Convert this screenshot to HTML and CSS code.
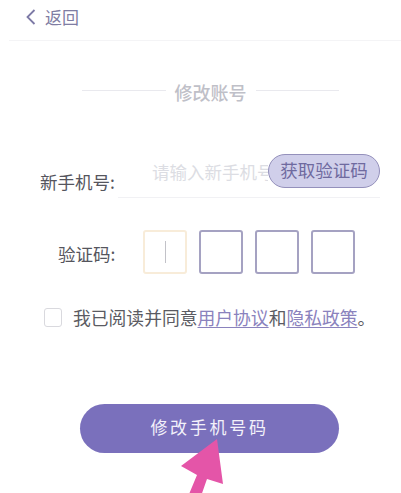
FILE: index.html
```html
<!DOCTYPE html>
<html lang="zh">
<head>
<meta charset="utf-8">
<title>修改账号</title>
<link rel="stylesheet" href="styles.css">
</head>
<body>
<div class="page">
  <header class="topbar">
    <svg class="chev" width="12" height="18" viewBox="0 0 12 18"><path d="M9.5 2 L2.5 9 L9.5 16" fill="none" stroke="#7d7aa6" stroke-width="1.8"/></svg>
    <span class="back">返回</span>
  </header>
  <div class="title-row">
    <span class="rule"></span>
    <span class="title">修改账号</span>
    <span class="rule"></span>
  </div>
  <div class="phone-row">
    <span class="label phone-label">新手机号:</span>
    <div class="phone-field">
      <span class="placeholder">请输入新手机号</span>
      <span class="get-code">获取验证码</span>
    </div>
  </div>
  <div class="code-row">
    <span class="label">验证码:</span>
    <div class="codes">
      <span class="box active"><i class="caret"></i></span>
      <span class="box"></span>
      <span class="box"></span>
      <span class="box"></span>
    </div>
  </div>
  <div class="agree">
    <span class="check"></span>
    <span class="agree-text">我已阅读并同意<a class="link">用户协议</a>和<a class="link">隐私政策</a>。</span>
  </div>
  <div class="submit">修改手机号码</div>
  <svg class="arrow" width="60" height="60" viewBox="0 0 60 60"><path d="M41 0 L5 27 L21 36 L11 60 L24 60 L31 40 L47 45 Z" fill="#e455a8"/></svg>
</div>
</body>
</html>
```
FILE: styles.css
```css
* { box-sizing: border-box; }
html, body { margin: 0; padding: 0; background: #fff; }
body { font-family: "Noto Sans CJK SC", "Noto Sans", sans-serif; }
.page { position: relative; width: 401px; height: 493px; overflow: hidden; }
.topbar {
  height: 41px; margin-left: 9px; padding: 0 0 6px 16px;
  display: flex; align-items: center; gap: 8px;
  border-bottom: 1px solid #f4f4f6;
}
.back { font-size: 17px; color: #7f7da3; line-height: 24px; }
.title-row {
  margin-top: 39px; padding-left: 82px; width: 339px;
  display: flex; align-items: center; gap: 9px; height: 24px;
}
.rule { flex: 1; height: 1px; background: #e9e9ee; margin-top: -4px; }
.title { font-size: 18px; font-weight: 500; color: #bfc0c8; line-height: 24px; }
.label { font-size: 17.5px; color: #55555d; line-height: 24px; white-space: nowrap; }
.phone-row { margin-top: 50px; margin-left: 40px; width: 340px; display: flex; }
.phone-label { margin-top: 16px; width: 78px; }
.phone-field {
  flex: 1; height: 44px; padding-left: 34px; border-bottom: 1px solid #f1f1f4;
  display: flex; align-items: flex-start; overflow: hidden;
}
.placeholder {
  width: 116px; flex: none; overflow: hidden; white-space: nowrap;
  font-size: 17.5px; line-height: 24px; margin-top: 6px; color: #dcdde3;
}
.get-code {
  flex: none; width: 112px; height: 34px; border-radius: 17px;
  border: 1px solid #9490bb; background: #d0cfea; color: #6f6a9f;
  font-size: 17.5px; line-height: 30px; text-align: center;
}
.code-row { margin-top: 32px; display: flex; align-items: center; padding-left: 58px; }
.code-row .label { width: 85px; margin-top: 4px; }
.codes { display: flex; gap: 12px; }
.box {
  width: 44px; height: 44px; border: 2px solid #a5a2c2; border-radius: 3px;
  display: flex; align-items: center; justify-content: center;
}
.box.active { border-color: #f8ecd9; }
.caret { width: 1px; height: 22px; background: #c2c2c8; }
.agree { margin-top: 31px; padding-left: 44px; display: flex; align-items: center; gap: 11px; }
.check { width: 18px; height: 19px; border: 1px solid #d9d9de; border-radius: 3px; }
.agree-text { font-size: 17.8px; color: #5b5b62; line-height: 24px; white-space: nowrap; }
.link { color: #8a82bd; text-decoration: underline; text-underline-offset: 2px; }
.submit {
  margin: 75px 0 0 80px; width: 259px; height: 49px; border-radius: 25px;
  background: #7a70bc; color: #f3f1fa; font-size: 17px; letter-spacing: 2.7px;
  line-height: 46px; text-align: center;
}
.arrow { position: absolute; left: 176px; top: 439px; }
```
